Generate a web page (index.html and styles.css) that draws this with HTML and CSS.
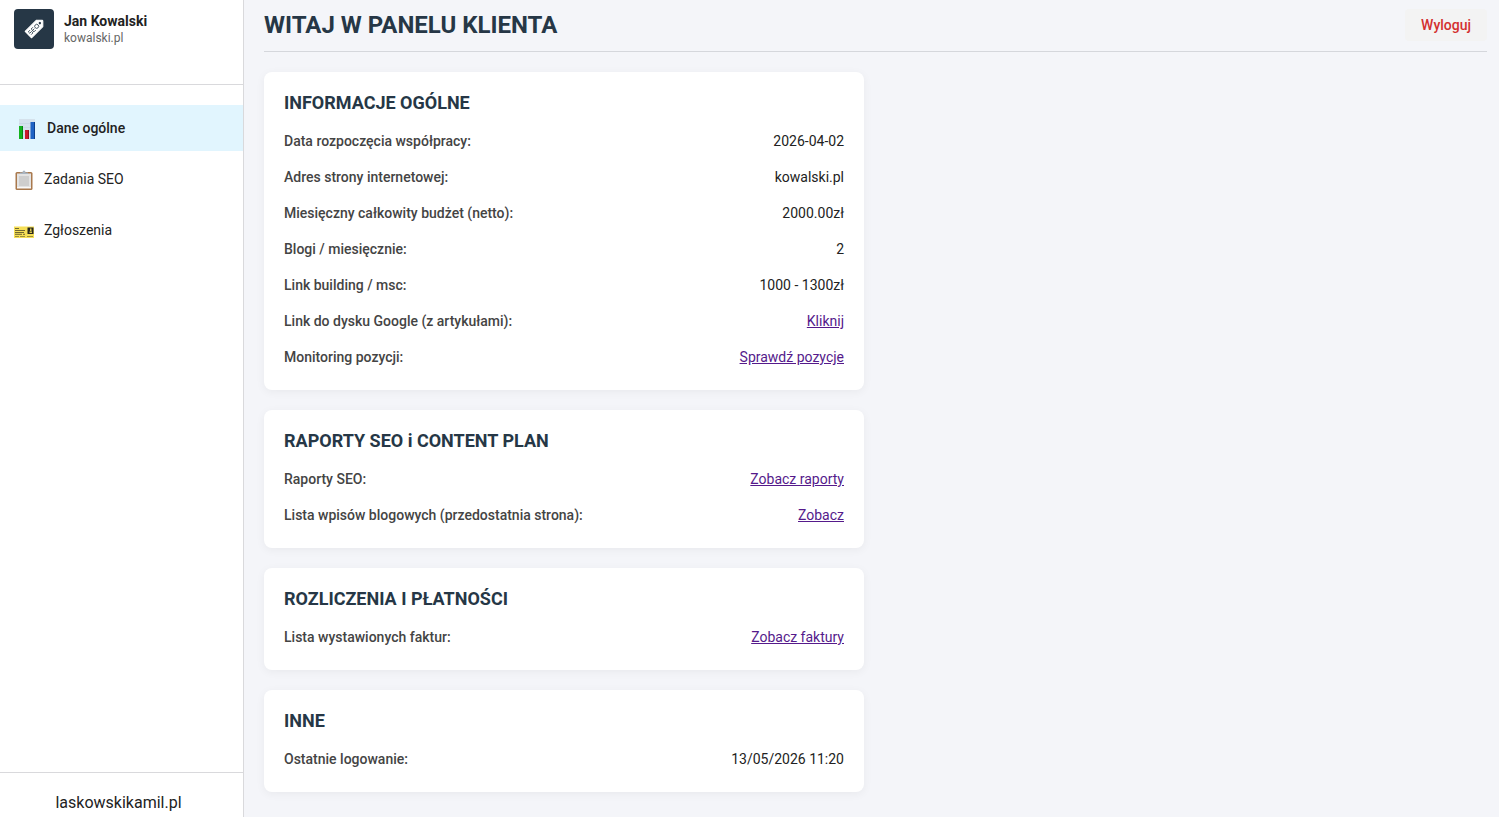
FILE: index.html
```html
<!DOCTYPE html>
<html lang="pl">
<head>
  <meta charset="utf-8">
  <meta name="viewport" content="width=device-width, initial-scale=1">
  <title>Panel klienta</title>
  <link rel="stylesheet" href="styles.css">
</head>
<body>
  <aside class="sidebar">
    <div class="profile">
      <svg class="profile-logo" viewBox="0 0 40 40" aria-hidden="true">
        <rect width="40" height="40" rx="4" fill="#263746"/>
        <g transform="rotate(-45 20 20)">
          <path d="M12 15.500h16l4 4v1l-4 4H12z" fill="#fff" stroke="#fff" stroke-linejoin="round"/>
          <circle cx="28.300" cy="20" r="1.200" fill="#263746"/>
          <g fill="none" stroke="#263746" stroke-width=".8">
            <path d="M16.500 18H14v2h2.500v2H14M20.500 18H18v4h2.500M18 20h2.500"/>
            <circle cx="23.800" cy="20" r="2"/>
          </g>
        </g>
      </svg>
      <div class="profile-text">
        <span class="profile-name">Jan Kowalski</span>
        <span class="profile-site">kowalski.pl</span>
      </div>
    </div>

    <nav class="menu">
      <a class="menu-item active" href="#">
        <svg class="menu-icon" viewBox="0 0 20 20" aria-hidden="true">
          <path d="M2 1h16v20H2z" fill="#d5e2ec"/>
          <path d="M2 5.500h16M2 9.500h16M2 13.500h16" stroke="#c3d3e0" stroke-width=".6"/>
          <path d="M2 8h4v13H2z" fill="#12b31e"/>
          <path d="M5 8h1v13H5z" fill="#078512"/>
          <path d="M8 12h4v9H8z" fill="#c91b2d"/>
          <path d="M11 12h1v9h-1z" fill="#941020"/>
          <path d="M13.500 4H18v17h-4.500z" fill="#1f63c4"/>
          <path d="M17 4h1v17h-1z" fill="#0c3f8c"/>
        </svg>
        Dane ogólne
      </a>
      <a class="menu-item" href="#">
        <svg class="menu-icon" viewBox="0 0 20 20" aria-hidden="true">
          <rect x="1.500" y="3" width="17" height="18" rx="1.500" fill="#a9794d"/>
          <path d="M3 4.500h14V19H3z" fill="#e3e3e3"/>
          <path d="M5 7h10v10H5z" fill="#cecece"/>
          <path d="M3 18h14v1.500H3z" fill="#f8f8f8"/>
          <path d="M6 5V3.500h2.500q0-2 1.500-2t1.500 2H14V5z" fill="#a9b4c0"/>
        </svg>
        Zadania SEO
      </a>
      <a class="menu-item" href="#">
        <svg class="menu-icon" viewBox="0 0 20 20" aria-hidden="true">
          <path d="M0 6.500h20V18H0z" fill="#f6df57"/>
          <path d="M1 8.500h4M1 10.500h10M1 12.500h9M1 14.300h7M9 14.300h2" stroke="#625a2c" stroke-width=".9"/>
          <path d="M1 16.500h4M6 16.500h5M13 16.500h6" stroke="#867b35" stroke-width=".8"/>
          <path d="M13.500 7.500h6V14h-6z" fill="#28281f"/>
          <path d="M16 8.500h1.500V11H16zM15.500 11.500H18V13h-2.500z" fill="#d9c64f"/>
        </svg>
        Zgłoszenia
      </a>
    </nav>

    <footer class="sidebar-footer">
      <a href="#">laskowskikamil.pl</a>
    </footer>
  </aside>

  <main class="content">
    <header class="top">
      <h1>WITAJ W PANELU KLIENTA</h1>
      <button class="logout" type="button">Wyloguj</button>
    </header>

    <div class="cards">
      <section class="card">
        <h2>INFORMACJE OGÓLNE</h2>
        <dl>
          <div class="row"><dt>Data rozpoczęcia współpracy:</dt><dd>2026-04-02</dd></div>
          <div class="row"><dt>Adres strony internetowej:</dt><dd>kowalski.pl</dd></div>
          <div class="row"><dt>Miesięczny całkowity budżet (netto):</dt><dd>2000.00zł</dd></div>
          <div class="row"><dt>Blogi / miesięcznie:</dt><dd>2</dd></div>
          <div class="row"><dt>Link building / msc:</dt><dd>1000 - 1300zł</dd></div>
          <div class="row"><dt>Link do dysku Google (z artykułami):</dt><dd><a href="#">Kliknij</a></dd></div>
          <div class="row"><dt>Monitoring pozycji:</dt><dd><a href="#">Sprawdź pozycje</a></dd></div>
        </dl>
      </section>

      <section class="card">
        <h2>RAPORTY SEO i CONTENT PLAN</h2>
        <dl>
          <div class="row"><dt>Raporty SEO:</dt><dd><a href="#">Zobacz raporty</a></dd></div>
          <div class="row"><dt>Lista wpisów blogowych (przedostatnia strona):</dt><dd><a href="#">Zobacz</a></dd></div>
        </dl>
      </section>

      <section class="card">
        <h2>ROZLICZENIA I PŁATNOŚCI</h2>
        <dl>
          <div class="row"><dt>Lista wystawionych faktur:</dt><dd><a href="#">Zobacz faktury</a></dd></div>
        </dl>
      </section>

      <section class="card">
        <h2>INNE</h2>
        <dl>
          <div class="row"><dt>Ostatnie logowanie:</dt><dd>13/05/2026 11:20</dd></div>
        </dl>
      </section>
    </div>
  </main>
</body>
</html>
```

FILE: styles.css
```css
*, *::before, *::after {
  margin: 0;
  padding: 0;
  box-sizing: border-box;
}

body {
  display: flex;
  min-height: 100vh;
  background-color: #f4f5f9;
  color: #222222;
  font-family: Roboto, sans-serif;
  font-size: 14px;
  line-height: 16px;
}

/* Sidebar */
.sidebar {
  display: flex;
  flex-direction: column;
  flex-shrink: 0;
  width: 244px;
  border-right: 1px solid #d9d9dc;
  background-color: #ffffff;
}

.profile {
  display: flex;
  align-items: flex-start;
  gap: 10px;
  padding: 9px 14px 35px;
  border-bottom: 1px solid #d9d9dc;
}

.profile-logo {
  width: 40px;
  height: 40px;
}

.profile-text {
  display: flex;
  flex-direction: column;
  gap: 1px;
  padding-top: 4px;
}

.profile-name {
  font-weight: 700;
}

.profile-site {
  color: #666666;
  font-size: 12px;
}

.menu {
  display: flex;
  flex-direction: column;
  flex-grow: 1;
  gap: 5px;
  padding-top: 20px;
}

.menu-item {
  display: flex;
  align-items: center;
  gap: 10px;
  padding: 13px 14px;
  color: inherit;
  line-height: 20px;
  text-decoration: none;
}

.menu-item.active {
  border-left: 3px solid #e1f5fe;
  background-color: #e1f5fe;
  font-weight: 500;
}

.menu-icon {
  width: 20px;
  height: 20px;
  overflow: visible;
}

.sidebar-footer {
  padding: 20px 20px 4px 14px;
  border-top: 1px solid #d9d9dc;
  font-size: 16px;
  line-height: 20px;
  text-align: center;
}

.sidebar-footer a {
  color: inherit;
  text-decoration: none;
}

/* Content */
.content {
  flex-grow: 1;
  padding: 0 12px 20px 20px;
}

.top {
  display: flex;
  align-items: center;
  justify-content: space-between;
  margin-bottom: 20px;
  padding: 9px 0 10px;
  border-bottom: 1px solid #d5d7dc;
}

h1, h2 {
  color: #263746;
  font-weight: 700;
}

h1 {
  font-size: 24px;
  line-height: 32px;
}

h2 {
  margin-bottom: 10px;
  font-size: 18px;
  line-height: 21px;
}

.logout {
  padding: 8px 16px;
  border: none;
  border-radius: 4px;
  background-color: #f3f3f3;
  color: #d32f2f;
  font-family: inherit;
  font-size: 14px;
  font-weight: 500;
  line-height: 16px;
  cursor: pointer;
}

.cards {
  display: flex;
  flex-direction: column;
  gap: 20px;
  max-width: 600px;
}

.card {
  padding: 20px 20px 15px;
  border-radius: 8px;
  background-color: #ffffff;
  box-shadow: 0 2px 10px rgba(0, 0, 0, 0.05);
}

.row {
  display: flex;
  justify-content: space-between;
  gap: 20px;
  padding: 10px 0;
}

dt {
  color: #444444;
  font-weight: 500;
}

dd a {
  color: #551a8b;
}
```
